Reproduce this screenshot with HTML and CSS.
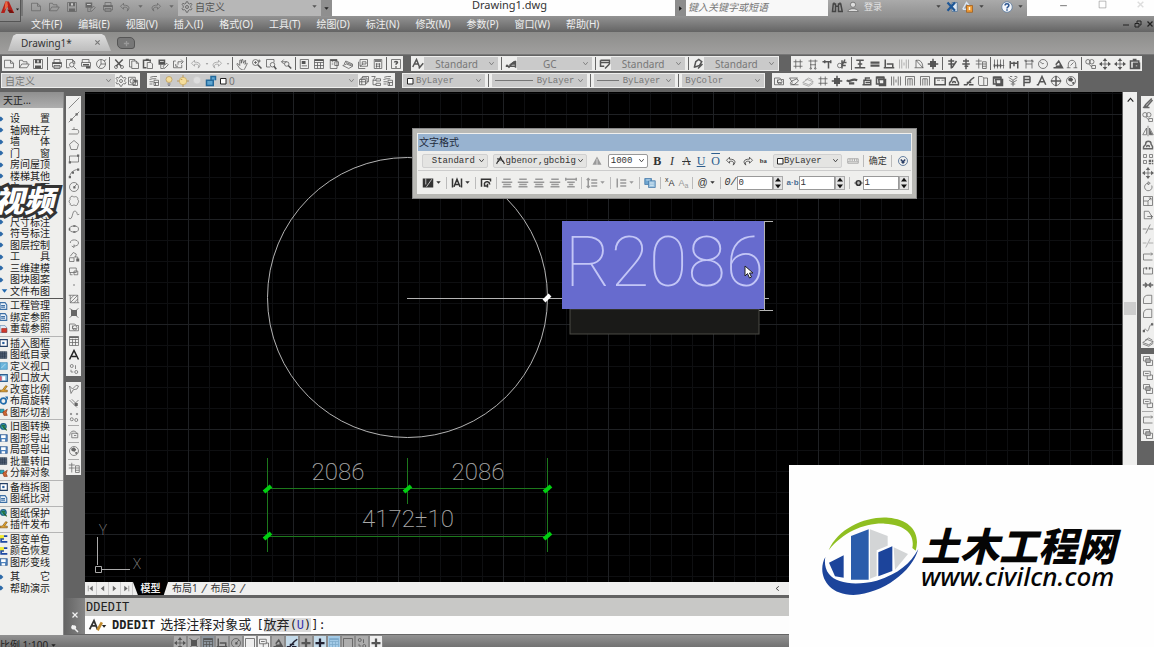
FILE: index.html
```html
<!DOCTYPE html>
<html lang="zh-CN">
<head>
<meta charset="utf-8">
<title>Drawing1.dwg</title>
<link rel="stylesheet" href="styles.css">
</head>
<body>
<svg class="sprite" aria-hidden="true">
<symbol id="new" viewBox="0 0 16 16"><path d="M2 3h8l4 4v6H2zM10 3v4h4"/></symbol>
<symbol id="open" viewBox="0 0 16 16"><path d="M2 13V3h4l1 2h5v3M2 13l3-5h10l-3 5z"/></symbol>
<symbol id="save" viewBox="0 0 16 16"><path d="M2 2h12v12H2z"/><path class="f" d="M4 2h8v5H4zM4 10h8v4H4z"/><path class="w" d="M7 3h2v3H7z"/></symbol>
<symbol id="print" viewBox="0 0 16 16"><path d="M4 6V2h8v4M2 6h12v6H2zM4 10h8v4H4z"/><path class="f" d="M2 6h12v2H2z"/></symbol>
<symbol id="preview" viewBox="0 0 16 16"><path d="M6 13H2V2h8l3 3v3M10 2v3h3"/><circle cx="9" cy="9" r="3"/><path d="M11 11l4 4"/></symbol>
<symbol id="plot" viewBox="0 0 16 16"><path d="M3 6V2h9v4M2 6h12v5H2z"/><path class="f" d="M4 8h8v2H4zM8 11h6v3H8z"/></symbol>
<symbol id="publish" viewBox="0 0 16 16"><circle cx="8" cy="8" r="6"/><path d="M8 2v6h6M8 8l-3 5M12 4l3-2"/></symbol>
<symbol id="cut" viewBox="0 0 16 16"><path stroke-width="2" d="M3 2l8 9M13 2L4 11"/><circle cx="4" cy="12" r="2"/><circle cx="12" cy="12" r="2"/></symbol>
<symbol id="copy" viewBox="0 0 16 16"><path d="M5 12H2V2h7v2M5 4h6l3 3v7H5zM11 4v3h3"/></symbol>
<symbol id="paste" viewBox="0 0 16 16"><path stroke-width="2" d="M6 13H2V3h9v2M5 2h4"/><path d="M7 6h5l2 2v6H7z"/></symbol>
<symbol id="match" viewBox="0 0 16 16"><path class="f" d="M2 2h9v7H2z"/><path class="w" d="M4 4h5v1H4z"/><path d="M5 9v5h4M8 11l5-4 2 2-5 5z"/></symbol>
<symbol id="block" viewBox="0 0 16 16"><path d="M5 4H2v9h11V9M8 9V5h6M12 2l3 3-3 3M5 8v3h3"/></symbol>
<symbol id="undo" viewBox="0 0 16 16"><path d="M6 3L2 7l4 4V8.500c5-1 6 1 5 5 4-4 3-8-5-8z"/></symbol>
<symbol id="redo" viewBox="0 0 16 16"><path d="M10 3l4 4-4 4V8.500c-5-1-6 1-5 5-4-4-3-8 5-8z"/></symbol>
<symbol id="down" viewBox="0 0 16 16"><path class="f" d="M3 5h10l-5 6z"/></symbol>
<symbol id="chev" viewBox="0 0 16 16"><path stroke-width="2" d="M3 5l5 6 5-6"/></symbol>
<symbol id="hand" viewBox="0 0 16 16"><path d="M5 14L1 8l1-1 3 3V3l2-.5V7l1-5h1l1 5 2-4 1 .5-1 5 2-2 1 1-3 6-2 3z"/></symbol>
<symbol id="zoom" viewBox="0 0 16 16"><circle cx="6" cy="6" r="4"/><path stroke-width="2" d="M9 9l5 5"/><path d="M4 6h4M6 4v4M11 2v4M13 4H9"/></symbol>
<symbol id="zwin" viewBox="0 0 16 16"><path d="M12 6V2H2v10h5"/><circle cx="10" cy="9" r="3"/><path stroke-width="2" d="M12 11l3 4"/></symbol>
<symbol id="zprev" viewBox="0 0 16 16"><path d="M2 5h7M2 5l3-3M2 5l3 3"/><circle cx="9" cy="8" r="3"/><path stroke-width="2" d="M11 10l4 4"/></symbol>
<symbol id="props" viewBox="0 0 16 16"><path d="M3 2h11v12H3z"/><path class="f" d="M5 4h5v4H5zM5 10h7v1H5z"/></symbol>
<symbol id="grid" viewBox="0 0 16 16"><path d="M2 2h12v12H2zM2 6h12M6 6v8M10 6v8M2 10h12"/><path class="f" d="M2 2h12v2H2z"/></symbol>
<symbol id="panel" viewBox="0 0 16 16"><path d="M3 2h9v12H3zM9 5h5v5H9zM5 5h2M5 8h2"/><path class="f" d="M3 2h9v2H3z"/></symbol>
<symbol id="stack" viewBox="0 0 16 16"><path d="M1 10l5-2 8 3-5 3zM3 8l2-4 9 4v3M5 6l8 3"/></symbol>
<symbol id="markup" viewBox="0 0 16 16"><path d="M4 2h10v9H4zM2 5v9h9M7 5h5v3H7zM4 11l4-3"/></symbol>
<symbol id="calc" viewBox="0 0 16 16"><path d="M3 2h10v12H3zM5 8h6M5 11h6M6 7v6M10 7v6"/><path class="f" d="M4 3h8v2H4z"/></symbol>
<symbol id="help" viewBox="0 0 16 16"><path d="M2 2h12v12H2z"/><path stroke-width="2" d="M6 6c0-2 4-2 4 0 0 1-2 1-2 3M8 11v2"/></symbol>
<symbol id="gear" viewBox="0 0 16 16"><circle cx="8" cy="8" r="2"/><path d="M7 1h2l.5 2 2 1 2-1 1 2-1.500 1.500v2l1.500 1.500-1 2-2-.5-2 1.500-.5 2H7l-.5-2-2-1.500-2 .5-1-2L3 8.500v-2L1.500 5l1-2 2 1 2-1z"/></symbol>
<symbol id="wsave" viewBox="0 0 16 16"><path d="M2 3h9v10H2z"/><circle cx="7" cy="8" r="3"/><path d="M8 7h6v7H8z"/><path class="f" d="M10 7h3v3h-3z"/></symbol>
<symbol id="textstyle" viewBox="0 0 16 16"><path stroke-width="2" d="M1 12L6 2l4 10M3 8h5M15 7l-6 7"/></symbol>
<symbol id="fontaa" viewBox="0 0 16 16"><path stroke-width="2" d="M4 10l4-8 4 8M6 7h4M1 14l3-6M15 14l-3-6M2 5h3"/></symbol>
<symbol id="dimstyle" viewBox="0 0 16 16"><path stroke-width="2" d="M1 11h13M14 4v9M12 5l-6 6M2 9l4 4"/><path class="f" d="M5 9l9-6v6z"/></symbol>
<symbol id="tabstyle" viewBox="0 0 16 16"><path stroke-width="2" d="M2 3h12v5M2 3v8h5M2 6h12M14 8l-6 6"/></symbol>
<symbol id="mlstyle" viewBox="0 0 16 16"><path stroke-width="2" d="M3 13l2-8 4-3 4 3-3 5-6 2M14 8l-6 6"/></symbol>
<symbol id="layers" viewBox="0 0 16 16"><path d="M3 3l4-1h5M2 6l4-1h5M2 9h5M2 12h4M8 7h6v7H8zM8 10h6M10 10v4"/></symbol>
<symbol id="bulb" viewBox="0 0 16 16"><circle cx="8" cy="6" r="4" fill="#f5dd9a" stroke="#b79a5c"/><path stroke="#556" d="M6 12h4M7 14h2"/></symbol>
<symbol id="sun" viewBox="0 0 16 16"><circle cx="8" cy="8" r="5" fill="#f5dd9a" stroke="#c8ab63"/><path stroke="#b48a3c" d="M8 0v3M8 13v3M0 8h3M13 8h3M5 6h2"/></symbol>
<symbol id="pale" viewBox="0 0 16 16"><circle cx="8" cy="7" r="5" fill="#ddd" stroke="#ccc"/></symbol>
<symbol id="lock" viewBox="0 0 16 16"><path fill="#5ea4cf" stroke="#23699b" stroke-width="2" d="M2 7h9v7H2zM8 7V2h6v5"/></symbol>
<symbol id="sq" viewBox="0 0 16 16"><path fill="#fff" stroke="#222" stroke-width="2" d="M3 3h11v11H3z"/></symbol>
<symbol id="lay1" viewBox="0 0 16 16"><path d="M2 6h8v7H2zM4 6V4h8v7h-2M6 4V2h8v7h-2M2 9h8M5 6v7"/></symbol>
<symbol id="lay2" viewBox="0 0 16 16"><path d="M2 2h5l-2 4M8 5h6v3H8zM8 11h6v3H8zM4 6v7h4M4 7h4"/></symbol>
<symbol id="hash" viewBox="0 0 16 16"><path d="M5 2v12M11 2v12M2 5h12M2 11h12"/></symbol>
<symbol id="axis" viewBox="0 0 16 16"><path d="M5 2v12M11 2v12M2 4h12M4 9h8"/><circle cx="5" cy="14" r="1"/><circle cx="11" cy="14" r="1"/></symbol>
<symbol id="tee" viewBox="0 0 16 16"><path stroke-width="2" d="M2 5h12M10 5v9M5 3v4M13 3v4"/></symbol>
<symbol id="gdim" viewBox="0 0 16 16"><circle cx="5" cy="10" r="3"/><path stroke-width="2" d="M8 3v11M8 6h6M12 2l-4 8M8 10h5"/></symbol>
<symbol id="ibeam" viewBox="0 0 16 16"><path stroke-width="2" d="M3 3h10M8 3v9M1 13h14M5 8h6"/></symbol>
<symbol id="eq" viewBox="0 0 16 16"><path stroke-width="3" d="M2 6h12M2 10h12"/></symbol>
<symbol id="bench" viewBox="0 0 16 16"><path stroke-width="2" d="M3 2v11h12M5 8h8v5M1 13h3"/></symbol>
<symbol id="bars" viewBox="0 0 16 16"><path d="M2 2v12M5 2v12M11 2v12M14 2v12M8 6v4"/></symbol>
<symbol id="tri" viewBox="0 0 16 16"><path d="M2 13h12M4 13V3h4c4 2 5 5 5 10M4 3l9 10"/></symbol>
<symbol id="col" viewBox="0 0 16 16"><path class="f" d="M4 4h8v8H4z"/><path stroke-width="2" d="M8 1v14M1 8h14"/></symbol>
<symbol id="sheng" viewBox="0 0 16 16"><path stroke-width="2" d="M3 4h8M3 8h8M7 1v13M14 4l-6 9"/></symbol>
<symbol id="pin" viewBox="0 0 16 16"><path stroke-width="2" d="M8 1v14M4 4h8M3 8h10M6 11h5"/></symbol>
<symbol id="tpl" viewBox="0 0 16 16"><path d="M1 4h8M5 1v13M1 8h8M10 5h5v9h-5zM10 8h5M10 11h5"/></symbol>
<symbol id="dimv" viewBox="0 0 16 16"><path d="M2 2v12M6 2v12M10 2v12M14 2v12M1 10h14"/><path class="f" d="M5 8h2v4H5zM9 8h2v4H9zM1 8h2v4H1z"/></symbol>
<symbol id="dimh" viewBox="0 0 16 16"><path stroke-width="2" d="M3 4v10M13 4v10M3 7h10M8 5v6"/></symbol>
<symbol id="dima" viewBox="0 0 16 16"><path d="M2 4h12M4 2v12M12 2v12M4 8h8M2 3l3 2M11 3l3 2"/></symbol>
<symbol id="clock" viewBox="0 0 16 16"><circle cx="8" cy="8" r="6"/><path d="M8 8L4 5M8 8l1-1"/></symbol>
<symbol id="ang" viewBox="0 0 16 16"><path stroke-width="2" d="M2 13h12L9 4 5 9M5 11h5M11 8v5"/></symbol>
<symbol id="arc2" viewBox="0 0 16 16"><path d="M3 13V9c0-8 10-8 10 0v4M1 13h5M10 13h5M6 10l4-4"/></symbol>
<symbol id="bub" viewBox="0 0 16 16"><circle cx="4" cy="5" r="3"/><circle cx="9" cy="5" r="3"/><path d="M9 10h5v4H9zM5 8l4 4"/></symbol>
<symbol id="move" viewBox="0 0 16 16"><path d="M8 2v12M2 8h12"/><path class="f" d="M8 0l3 4H5zM8 16l3-4H5zM0 8l4-3v6zM16 8l-4-3v6z"/></symbol>
<symbol id="clip" viewBox="0 0 16 16"><path stroke-width="2" d="M2 4h11v10H2zM5 2h5M6 7h8v7H6zM8 9h4v3H8z"/></symbol>
<symbol id="wave" viewBox="0 0 16 16"><path stroke-width="3" d="M1 7c4 4 6-3 14 0M4 11h7"/></symbol>
<symbol id="leaf" viewBox="0 0 16 16"><path d="M2 4h11M5 8l7-3 2 3-6 5-5-2zM3 13h11M2 4l4 6"/></symbol>
<symbol id="cube" viewBox="0 0 16 16"><path d="M1 10l6-4 8 3-6 4zM1 12l8 3 6-4M4 7l5-3 5 3"/></symbol>
<symbol id="bld" viewBox="0 0 16 16"><path stroke-width="2" d="M2 13h12M4 12V7h9v5M6 7V4h6M6 10h6"/></symbol>
<symbol id="frame" viewBox="0 0 16 16"><path stroke-width="2" d="M2 3h10v9H2zM5 6h9v8H6z"/><path class="f" d="M2 2h10v3H2z"/></symbol>
<symbol id="door" viewBox="0 0 16 16"><path d="M2 14V2h12v12M5 14V5h6v9M8 5v9"/></symbol>
<symbol id="sheet" viewBox="0 0 16 16"><path stroke-width="2" d="M1 4h14v9H1z"/><path d="M4 7h4M10 7h3"/></symbol>
<symbol id="stair" viewBox="0 0 16 16"><path stroke-width="2" d="M1 13h4l6-7 4-3M5 10h6M8 13h6"/></symbol>
<symbol id="book" viewBox="0 0 16 16"><path d="M2 2h5l2 2v10H3L2 12zM9 4h5v10H9"/></symbol>
<symbol id="tree" viewBox="0 0 16 16"><path d="M8 15V7M2 3l6 4 6-4M3 7l5 3 5-3M5 12h6M4 2h3M10 2h3"/></symbol>
<symbol id="flag" viewBox="0 0 16 16"><path stroke-width="2" d="M4 15V2h8M4 6h8M4 10h8M12 2v8"/></symbol>
<symbol id="at" viewBox="0 0 16 16"><path stroke-width="2" d="M3 13L8 2l5 11M5 9h6M1 13h3"/></symbol>
<symbol id="target" viewBox="0 0 16 16"><circle cx="8" cy="8" r="6"/><path stroke-width="2" d="M8 1v14M1 8h14"/></symbol>
<symbol id="globe" viewBox="0 0 16 16"><circle cx="8" cy="8" r="6"/><path class="f" d="M4 5l4-2 3 3-2 3-4-1zM9 10l4-1-2 4z"/></symbol>
<symbol id="line" viewBox="0 0 16 16"><path d="M1 15L15 1"/></symbol>
<symbol id="xline" viewBox="0 0 16 16"><path d="M1 15L15 1"/><path class="f" d="M3 10h3v3H3zM10 3h3v3h-3z"/></symbol>
<symbol id="pline" viewBox="0 0 16 16"><path d="M1 12h11c3 0 3-6 0-6H8M8 3v3H5"/></symbol>
<symbol id="poly" viewBox="0 0 16 16"><path d="M8 2l6 5-2 7H4L2 7z"/></symbol>
<symbol id="rect" viewBox="0 0 16 16"><path d="M2 4h12v8H2z"/><path class="f" d="M1 11h3v3H1zM12 2h3v3h-3z"/></symbol>
<symbol id="arc" viewBox="0 0 16 16"><path d="M2 14C3 7 7 4 14 3"/><path class="f" d="M1 12h3v3H1zM5 6h3v3H5zM12 2h3v3h-3z"/></symbol>
<symbol id="circ" viewBox="0 0 16 16"><circle cx="8" cy="8" r="6"/><path d="M8 8l4-4"/><path class="f" d="M7 7h3v3H7z"/></symbol>
<symbol id="cloud" viewBox="0 0 16 16"><path d="M4 2c2-1 3 0 4 1 2-2 6 0 5 3 2 2 1 4 0 5 0 3-3 4-5 2-2 2-6 1-5-2-2-1-2-4 0-5-1-1 0-3 1-4z"/></symbol>
<symbol id="spline" viewBox="0 0 16 16"><path d="M1 12c6 5 4-12 9-9 4 2 0 6 5 4"/></symbol>
<symbol id="ell" viewBox="0 0 16 16"><ellipse cx="8" cy="8" rx="6" ry="4"/><path class="f" d="M1 7h2v3H1zM7 3h3v2H7zM7 11h3v2H7z"/></symbol>
<symbol id="earc" viewBox="0 0 16 16"><path d="M3 8c0-6 11-5 11 0 0 3-3 4-6 4M8 10v4l-3-2"/></symbol>
<symbol id="ins" viewBox="0 0 16 16"><path d="M3 7l4-5 4 2-1 4M2 9h6v5H2zM8 8h5v5"/><path class="f" d="M11 10h4v4h-4z"/></symbol>
<symbol id="mk" viewBox="0 0 16 16"><path d="M2 4h9v6H2zM8 8h5v5H8zM3 10v3h3"/></symbol>
<symbol id="pt" viewBox="0 0 16 16"><circle class="f" cx="8" cy="8" r="1"/></symbol>
<symbol id="hatch" viewBox="0 0 16 16"><path d="M3 3h10v10H3zM3 8l5-5M3 13L13 3M8 13l5-5M1 3h2M13 13h2"/></symbol>
<symbol id="grad" viewBox="0 0 16 16"><path d="M2 2l4 2M14 2l-3 2M2 14l3-2M14 14l-3-2"/><path class="f" d="M4 4h8v8H4z"/></symbol>
<symbol id="region" viewBox="0 0 16 16"><path d="M2 13V4h7l2 2h3v7zM6 6v4h5"/><circle cx="9" cy="9" r="3"/></symbol>
<symbol id="table" viewBox="0 0 16 16"><path d="M2 2h12v12H2zM2 6h12M2 10h12M6 5v9M10 5v9"/><path class="f" d="M2 2h12v2H2z"/></symbol>
<symbol id="mtext" viewBox="0 0 16 16"><path stroke="#222" stroke-width="2" d="M2 14L8 2l6 12M5 10h6"/></symbol>
<symbol id="addsel" viewBox="0 0 16 16"><circle cx="5" cy="4" r="2"/><circle cx="11" cy="12" r="2"/><path d="M10 3v5M4 9v3h3"/></symbol>
<symbol id="tag" viewBox="0 0 16 16"><path d="M4 14L2 4l4 4 5-5 3 1-2 4-5 1z"/></symbol>
<symbol id="tag2" viewBox="0 0 16 16"><path d="M2 4l6 6 6-6M5 3l7 7M8 10l4 4"/><path class="f" d="M9 8h4v4H9z"/></symbol>
<symbol id="dots" viewBox="0 0 16 16"><circle cx="4" cy="4" r="1"/><circle cx="12" cy="4" r="1"/><circle cx="5" cy="11" r="2"/><circle cx="11" cy="12" r="2"/></symbol>
<symbol id="para" viewBox="0 0 16 16"><path d="M2 10c1-7 8-8 10-2M5 7h8v6H5zM8 10h3"/></symbol>
<symbol id="erase" viewBox="0 0 16 16"><path stroke-width="2" d="M13 2L5 10l-2 3 4-1 7-8M2 14h8"/></symbol>
<symbol id="mirror" viewBox="0 0 16 16"><path d="M8 1v14M6 4v9H1zM10 4v9h5z"/><path class="f" d="M10 5l4 8h-4z"/></symbol>
<symbol id="offset" viewBox="0 0 16 16"><path stroke-width="2" d="M2 13c-1-5 3-3 3-7 0-4 7-4 7 0 0 3 3 2 2 7zM6 11c0-3 4-3 4 0"/></symbol>
<symbol id="array" viewBox="0 0 16 16"><path d="M2 2h4v4H2zM10 2h4v4h-4zM2 10h4v4H2z"/><path class="f" d="M9 9h3v3H9zM13 9h2v3h-2zM9 13h3v2H9zM13 13h2v2h-2z"/></symbol>
<symbol id="rotate" viewBox="0 0 16 16"><path d="M8 3a5 5 0 1 0 5 3M8 1v4l3-2z"/></symbol>
<symbol id="scale" viewBox="0 0 16 16"><path d="M2 2h12v12H2zM2 8h6v6M8 8l4-4M12 7V4H9"/></symbol>
<symbol id="stretch" viewBox="0 0 16 16"><path d="M3 13V3h6l4 7v3zM7 10h7M12 8l2 2-2 2"/></symbol>
<symbol id="trim" viewBox="0 0 16 16"><path d="M1 8h5M9 8h6M11 2L5 14"/></symbol>
<symbol id="brk" viewBox="0 0 16 16"><path d="M14 4H2v8h12M12 2l2 2-2 2"/></symbol>
<symbol id="brk2" viewBox="0 0 16 16"><path d="M6 4H2v8h12V4h-4"/><path class="f" d="M5 3h2v3H5zM9 3h2v3H9z"/></symbol>
<symbol id="join" viewBox="0 0 16 16"><path stroke-width="2" d="M1 8h5M10 8h5M4 5l3 3-3 3M12 5L9 8l3 3"/></symbol>
<symbol id="fillet" viewBox="0 0 16 16"><path d="M2 14V8c1-4 3-5 6-5h5v11z"/></symbol>
<symbol id="blend" viewBox="0 0 16 16"><path d="M2 14c2-9 5 4 7-3 1-4 2-6 5-8"/><path class="f" d="M1 12h3v3H1zM12 3h3v3h-3z"/></symbol>
<symbol id="order" viewBox="0 0 16 16"><path d="M2 2h8v6H2zM6 10v4h8V7h-3"/><path fill="#aaa" d="M5 5h6v5H5z"/></symbol>
<symbol id="order2" viewBox="0 0 16 16"><path d="M2 3h9v6H2zM7 9v5h7V8h-3M4 6h5"/></symbol>
<symbol id="nfirst" viewBox="0 0 16 16"><path d="M4 3v10"/><path class="f" d="M12 3v10L6 8z"/></symbol>
<symbol id="nprev" viewBox="0 0 16 16"><path class="f" d="M11 3v10L5 8z"/></symbol>
<symbol id="nnext" viewBox="0 0 16 16"><path class="f" d="M5 3v10l6-5z"/></symbol>
<symbol id="nlast" viewBox="0 0 16 16"><path d="M12 3v10"/><path class="f" d="M4 3v10l6-5z"/></symbol>
<symbol id="x" viewBox="0 0 16 16"><path stroke-width="2.500" d="M3 3l10 10M13 3L3 13"/></symbol>
<symbol id="wrench" viewBox="0 0 16 16"><path stroke-width="3" d="M14 14L7 7M3 2c-3 4 1 7 5 5 2-3 0-5-2-5v4H4z"/></symbol>
<symbol id="annot" viewBox="0 0 16 16"><path class="f" d="M8 2l6 11H2z"/><path stroke="#eee" d="M8 5v8"/></symbol>
<symbol id="ruler" viewBox="0 0 16 16"><path d="M1 5h14v6H1zM4 5v3M7 5v3M10 5v3M13 5v3M1 9h14"/></symbol>
<symbol id="round" viewBox="0 0 16 16"><circle cx="8" cy="8" r="6" stroke="#3a5c88"/><path stroke="#2a3e66" stroke-width="2" d="M5 6l3 3 3-3"/><path fill="#2a3e66" stroke="none" d="M5 9h6l-3 3z"/></symbol>
<symbol id="mcol" viewBox="0 0 16 16"><path class="f" d="M1 2h14v12H1z"/><path stroke="#eee" d="M5 2v8M13 3L6 13"/></symbol>
<symbol id="mjust" viewBox="0 0 16 16"><path stroke-width="2" d="M2 2v12M14 2v12M4 13L8 3l4 10M5 10h6"/></symbol>
<symbol id="parag" viewBox="0 0 16 16"><path stroke-width="2" d="M2 13V3h12v3M6 8c2-3 7-2 7 2M6 8v4h4M10 9v5"/></symbol>
<symbol id="align" viewBox="0 0 16 16"><path stroke-width="2" d="M3 3h10M1 7h14M3 10h10M2 13h12"/></symbol>
<symbol id="dist" viewBox="0 0 16 16"><path stroke-width="2" d="M1 3h14M3 7h10M5 10h6M3 13h10M1 1v4M15 1v4"/></symbol>
<symbol id="lsp" viewBox="0 0 16 16"><path stroke-width="2" d="M3 2v12M7 4h8M7 8h8M7 12h8M1 4l2-2 2 2M1 12l2 2 2-2"/></symbol>
<symbol id="num" viewBox="0 0 16 16"><path stroke-width="2" d="M3 2v12M7 4h8M7 8h8M7 12h8"/></symbol>
<symbol id="field" viewBox="0 0 16 16"><path fill="#6ea5cf" stroke="#4478a8" d="M1 2h9v8H1z"/><path fill="#9cc3df" stroke="#4478a8" d="M6 5h9v9H6z"/><path stroke="#e8f3fa" d="M3 4h5M8 8h5M8 11h5"/></symbol>
<symbol id="oval" viewBox="0 0 16 16"><ellipse cx="8" cy="8" rx="4" ry="4" stroke-width="3"/><path d="M0 8h16"/></symbol>
<symbol id="spin" viewBox="0 0 10 16"><path class="f" d="M5 1l4 5H1zM5 15l4-5H1z"/></symbol>
<symbol id="bino" viewBox="0 0 16 16"><path stroke-width="2" d="M2 14l1-10h3v10zM10 14V4h3l2 10zM6 7h4M4 2v2M12 2v2"/></symbol>
<symbol id="user" viewBox="0 0 16 16"><circle cx="8" cy="5" r="3.500" fill="#ddd"/><path fill="#ddd" d="M1 14c1-5 13-5 14 0z"/></symbol>
<symbol id="exch" viewBox="0 0 16 16"><path fill="#dfe8f2" stroke="#4f7296" d="M8 2h7v12H8z"/><path stroke="#1f5796" stroke-width="3" d="M2 2l10 11M12 2L2 13"/></symbol>
<symbol id="a360" viewBox="0 0 16 16"><path stroke="#d7e3f2" stroke-width="2" d="M1 11L6 2l5 6M1 11h5"/><path fill="#ee9a35" stroke="#9e5b19" d="M6 6h8v9H6z"/><path stroke="#fff3d8" stroke-width="2" d="M10 8v4"/></symbol>
<symbol id="qm" viewBox="0 0 16 16"><circle cx="8" cy="8" r="7" fill="#f3f6fb" stroke="#55789f"/><path stroke="#2c558f" stroke-width="2" d="M5.500 6c0-3 5-3 5 0 0 2-2.500 1.500-2.500 4M8 11v2"/></symbol>
<symbol id="min" viewBox="0 0 16 16"><path stroke-width="2" d="M2 10h12"/></symbol>
<symbol id="max" viewBox="0 0 16 16"><path d="M2 2h12v12H2z"/></symbol>
<symbol id="rest" viewBox="0 0 16 16"><path stroke-width="2" d="M2 7h8v7H2zM6 6V2h8v8h-3"/></symbol>
<symbol id="plus" viewBox="0 0 16 16"><path stroke-width="3" d="M8 2v12M2 8h12"/></symbol>
<symbol id="arr" viewBox="0 0 16 16"><path fill="#2d6aa8" stroke="none" d="M0 4h2l4 4-4 4H0z"/></symbol>
<symbol id="p-doc" viewBox="0 0 16 16"><path fill="#eaf2fa" stroke="#3d6fa5" stroke-width="2" d="M0 2h9l3 4v8H0zM2 7h7M2 10h7"/></symbol>
<symbol id="p-red" viewBox="0 0 16 16"><path fill="#eaf2fa" stroke="#3d6fa5" d="M0 2h9l3 4v8H0z"/><path fill="#d2382c" stroke="#8f1e16" d="M3 7h9v7H3z"/></symbol>
<symbol id="p-dark" viewBox="0 0 16 16"><path fill="#56657a" stroke="#243346" d="M0 2h12v12H0zM0 6h12M0 10h12M4 2v12M8 2v12"/></symbol>
<symbol id="p-ins" viewBox="0 0 16 16"><path fill="#fff" stroke="#243f66" stroke-width="2" d="M0 2h13v12H0z"/><path fill="#2a5f9c" stroke="none" d="M4 6h4v4H4z"/></symbol>
<symbol id="p-blue" viewBox="0 0 16 16"><path fill="#6bb6dd" stroke="#2d7fb0" d="M0 2h13v12H0z"/><path stroke="#e6f5fc" d="M2 12L10 4"/></symbol>
<symbol id="p-view" viewBox="0 0 16 16"><path fill="#9cc8e8" stroke="#2d5f90" stroke-width="2" d="M0 2h13v12H0z"/><path fill="#d85a6a" stroke="none" d="M0 5h3v8H0z"/><path fill="#fff" stroke="none" d="M4 5h5v7H4z"/></symbol>
<symbol id="p-gold" viewBox="0 0 16 16"><path fill="#e2a22b" stroke="#704600" d="M0 13h13v-3H8l5-7-3-1-6 8H0z"/></symbol>
<symbol id="p-ring" viewBox="0 0 16 16"><circle cx="6" cy="8" r="5" stroke="#226cab" stroke-width="3"/><path fill="#226cab" stroke="none" d="M9 0h5v6z"/></symbol>
<symbol id="p-disk" viewBox="0 0 16 16"><path fill="#4f83bd" stroke="#1f4880" d="M0 2h13v12H0z"/><path fill="#fff" stroke="none" d="M2 3h8v5H2zM3 10h6v4H3z"/></symbol>
<symbol id="p-mix" viewBox="0 0 16 16"><path fill="#2aa7b9" stroke="#11556d" d="M0 3h7v6H0z"/><path fill="#d06632" stroke="#7c2d0f" d="M5 8l8-5-2 6 2 5H7z"/></symbol>
<symbol id="p-green" viewBox="0 0 16 16"><circle cx="6" cy="7" r="5" fill="#3aa89d" stroke="#1b5b86" stroke-width="2"/><path stroke="#215f24" stroke-width="2" d="M6 8l6 6M3 6h6"/></symbol>
<symbol id="p-yel" viewBox="0 0 16 16"><path fill="#f0ea34" stroke="none" d="M0 1h7v7H0z"/><path stroke="#1e4aa3" stroke-width="3" d="M7 3h6M7 8H2v5h11"/></symbol>
</svg>

<header class="titlebar">
  <button class="app" aria-label="应用程序菜单"><svg class="applogo" viewBox="0 0 16 16"><path fill="#b3201a" d="M0 13L5 0h4l6 13h-5L7 5l-3 8z"/><path fill="#ec6440" d="M5 0h2l1 5-4 5z"/><path fill="#74110d" d="M7 9l5 1 3 3h-5z"/></svg><svg class="tiny"><use href="#down"/></svg></button>
  <div class="quick">
    <button aria-label="新建"><svg><use href="#new"/></svg></button><button aria-label="打开"><svg><use href="#open"/></svg></button><button aria-label="保存"><svg><use href="#save"/></svg></button><button aria-label="另存为"><svg><use href="#match"/></svg></button><button aria-label="打印"><svg><use href="#print"/></svg></button><button aria-label="放弃"><svg><use href="#undo"/></svg></button><svg class="tiny"><use href="#down"/></svg><button aria-label="重做"><svg><use href="#redo"/></svg></button><svg class="tiny"><use href="#down"/></svg>
  </div>
  <label class="combo workspace-pick"><svg><use href="#gear"/></svg><select aria-label="工作空间"><option>自定义</option></select><svg class="tiny"><use href="#down"/></svg></label>
  <button class="more" aria-label="更多"><svg class="tiny"><use href="#down"/></svg></button>
  <h1 class="doc-title">Drawing1.dwg</h1>
  <button class="expand" aria-label="展开"><svg class="tiny"><use href="#nnext"/></svg></button>
  <input class="search" type="text" aria-label="搜索" placeholder="键入关键字或短语">
  <div class="account">
    <button aria-label="搜索"><svg><use href="#bino"/></svg></button><button class="login"><svg><use href="#user"/></svg>登录</button><svg class="tiny push"><use href="#down"/></svg><button aria-label="Exchange"><svg><use href="#exch"/></svg></button><button aria-label="A360"><svg><use href="#a360"/></svg></button><svg class="tiny"><use href="#down"/></svg><button class="qm" aria-label="帮助"><svg><use href="#qm"/></svg></button><svg class="tiny"><use href="#down"/></svg>
  </div>
  <div class="winbtns"><button aria-label="最小化"><svg><use href="#min"/></svg></button><button aria-label="最大化"><svg><use href="#max"/></svg></button><button class="faint" aria-label="关闭"><svg><use href="#x"/></svg></button></div>
</header>

<nav class="menubar">
  <button>文件(F)</button><button>编辑(E)</button><button>视图(V)</button><button>插入(I)</button><button>格式(O)</button><button>工具(T)</button><button>绘图(D)</button><button>标注(N)</button><button>修改(M)</button><button>参数(P)</button><button>窗口(W)</button><button>帮助(H)</button>
  <span class="childbtns"><button aria-label="最小化"><svg><use href="#min"/></svg></button><button aria-label="还原"><svg><use href="#rest"/></svg></button><button aria-label="关闭"><svg><use href="#x"/></svg></button></span>
</nav>

<div class="filetabs">
  <div class="filetab"><span>Drawing1*</span><button aria-label="关闭"><svg class="tiny"><use href="#x"/></svg></button></div>
  <button class="newtab" aria-label="新图形"><svg class="tiny"><use href="#plus"/></svg></button>
</div>

<div class="toolrows">
  <div class="toolrow">
    <div class="tools standard">
      <button aria-label="新建"><svg><use href="#new"/></svg></button><button aria-label="打开"><svg><use href="#open"/></svg></button><button aria-label="保存"><svg><use href="#save"/></svg></button><i></i>
      <button aria-label="打印"><svg><use href="#print"/></svg></button><button aria-label="预览"><svg><use href="#preview"/></svg></button><button aria-label="发布"><svg><use href="#plot"/></svg></button><button aria-label="三维打印"><svg><use href="#publish"/></svg></button><i></i>
      <button aria-label="剪切"><svg><use href="#cut"/></svg></button><button aria-label="复制"><svg><use href="#copy"/></svg></button><button aria-label="粘贴"><svg><use href="#paste"/></svg></button><button aria-label="特性匹配"><svg><use href="#match"/></svg></button><button aria-label="块编辑器"><svg><use href="#block"/></svg></button><i></i>
      <button class="dim" aria-label="放弃"><svg><use href="#undo"/></svg></button><svg class="dot"><use href="#down"/></svg><button class="dim" aria-label="重做"><svg><use href="#redo"/></svg></button><svg class="dot"><use href="#down"/></svg><i></i>
      <button aria-label="平移"><svg><use href="#hand"/></svg></button><button aria-label="实时缩放"><svg><use href="#zoom"/></svg></button><button aria-label="窗口缩放"><svg><use href="#zwin"/></svg></button><button aria-label="缩放上一个"><svg><use href="#zprev"/></svg></button><i></i>
      <button aria-label="特性"><svg><use href="#props"/></svg></button><button aria-label="设计中心"><svg><use href="#grid"/></svg></button><button aria-label="工具选项板"><svg><use href="#panel"/></svg></button><button aria-label="图纸集"><svg><use href="#stack"/></svg></button><button aria-label="标记集"><svg><use href="#markup"/></svg></button><button aria-label="计算器"><svg><use href="#calc"/></svg></button><i></i>
      <button aria-label="帮助"><svg><use href="#help"/></svg></button>
    </div>
    <div class="tools styles">
      <button aria-label="文字样式"><svg><use href="#textstyle"/></svg></button><label class="combo off"><select disabled aria-label="文字样式"><option>Standard</option></select><svg class="tiny"><use href="#chev"/></svg></label><i></i>
      <button aria-label="标注样式"><svg><use href="#dimstyle"/></svg></button><label class="combo off"><select disabled aria-label="标注样式"><option>GC</option></select><svg class="tiny"><use href="#chev"/></svg></label><i></i>
      <button aria-label="表格样式"><svg><use href="#tabstyle"/></svg></button><label class="combo off"><select disabled aria-label="表格样式"><option>Standard</option></select><svg class="tiny"><use href="#chev"/></svg></label><i></i>
      <button aria-label="引线样式"><svg><use href="#mlstyle"/></svg></button><label class="combo off"><select disabled aria-label="引线样式"><option>Standard</option></select><svg class="tiny"><use href="#chev"/></svg></label>
    </div>
    <div class="tools arch">
      <button aria-label="轴网"><svg><use href="#hash"/></svg></button><button aria-label="轴号"><svg><use href="#axis"/></svg></button><button aria-label="轴标"><svg><use href="#tee"/></svg></button><button aria-label="轴改"><svg><use href="#gdim"/></svg></button><i></i>
      <button aria-label="柱"><svg><use href="#ibeam"/></svg></button><button aria-label="墙"><svg><use href="#eq"/></svg></button><button aria-label="台"><svg><use href="#bench"/></svg></button><button class="dim" aria-label="窗"><svg><use href="#bars"/></svg></button><button aria-label="门"><svg><use href="#tri"/></svg></button><button aria-label="柱子"><svg><use href="#col"/></svg></button><i></i>
      <button aria-label="注一"><svg><use href="#sheng"/></svg></button><button aria-label="注二"><svg><use href="#pin"/></svg></button><button aria-label="注三"><svg><use href="#tpl"/></svg></button><i></i>
      <button aria-label="逐点标注"><svg><use href="#dimv"/></svg></button><button aria-label="快速标注"><svg><use href="#dimh"/></svg></button><button aria-label="两点标注"><svg><use href="#dima"/></svg></button><button aria-label="半径"><svg><use href="#clock"/></svg></button><button aria-label="角度"><svg><use href="#ang"/></svg></button><button aria-label="弧长"><svg><use href="#arc2"/></svg></button><i></i>
      <button aria-label="复制"><svg><use href="#bub"/></svg></button><button aria-label="移动"><svg><use href="#move"/></svg></button><button aria-label="移位"><svg><use href="#move"/></svg></button><button aria-label="粘贴"><svg><use href="#clip"/></svg></button>
    </div>
  </div>
  <div class="toolrow">
    <div class="tools space">
      <label class="combo off"><select disabled aria-label="工作空间"><option>自定义</option></select><svg class="tiny"><use href="#chev"/></svg></label><button aria-label="设置"><svg><use href="#gear"/></svg></button><button aria-label="保存工作空间"><svg><use href="#wsave"/></svg></button>
    </div>
    <div class="tools layer">
      <button aria-label="图层"><svg><use href="#layers"/></svg></button><label class="combo off"><svg><use href="#bulb"/></svg><svg><use href="#sun"/></svg><svg><use href="#pale"/></svg><svg><use href="#lock"/></svg><svg class="mini"><use href="#sq"/></svg><select disabled aria-label="图层"><option>0</option></select><svg class="tiny"><use href="#chev"/></svg></label><button aria-label="置为当前"><svg><use href="#lay1"/></svg></button><button aria-label="上一图层"><svg><use href="#lay2"/></svg></button><button aria-label="图层状态"><svg><use href="#layers"/></svg></button>
    </div>
    <div class="tools props mono">
      <label class="combo off first"><svg class="mini"><use href="#sq"/></svg><select disabled aria-label="颜色"><option>ByLayer</option></select><svg class="tiny"><use href="#chev"/></svg></label><i></i>
      <label class="combo off"><span class="rule"></span><select disabled aria-label="线型"><option>ByLayer</option></select><svg class="tiny"><use href="#chev"/></svg></label><i></i>
      <label class="combo off narrow"><span class="rule"></span><select disabled aria-label="线宽"><option>ByLayer</option></select><svg class="tiny"><use href="#chev"/></svg></label><i></i>
      <label class="combo off last"><select disabled aria-label="打印样式"><option>ByColor</option></select><svg class="tiny"><use href="#chev"/></svg></label>
    </div>
    <div class="tools common">
      <button aria-label="图集"><svg><use href="#region"/></svg></button><button aria-label="样式"><svg><use href="#leaf"/></svg></button><button class="dim" aria-label="三维"><svg><use href="#cube"/></svg></button><button aria-label="轴网"><svg><use href="#hash"/></svg></button><button aria-label="柱"><svg><use href="#col"/></svg></button><button aria-label="墙"><svg><use href="#wave"/></svg></button><button aria-label="房屋"><svg><use href="#bld"/></svg></button><button aria-label="窗框"><svg><use href="#frame"/></svg></button><button aria-label="栏杆"><svg><use href="#bars"/></svg></button><button aria-label="门"><svg><use href="#door"/></svg></button><button aria-label="双门"><svg><use href="#door"/></svg></button><button aria-label="图纸"><svg><use href="#sheet"/></svg></button><button aria-label="屋顶"><svg><use href="#offset"/></svg></button><button aria-label="楼梯"><svg><use href="#stair"/></svg></button><button aria-label="图册"><svg><use href="#book"/></svg></button><button aria-label="表格"><svg><use href="#frame"/></svg></button><button aria-label="树木"><svg><use href="#tree"/></svg></button><button aria-label="标高"><svg><use href="#flag"/></svg></button><button aria-label="文字"><svg><use href="#at"/></svg></button><button aria-label="定位"><svg><use href="#target"/></svg></button><button aria-label="渲染"><svg><use href="#globe"/></svg></button>
    </div>
  </div>
</div>

<main class="work">
  <aside class="palette">
    <h2>天正...</h2>
    <div class="lists">
      <ul class="g16"><li><svg><use href="#arr"/></svg><span class="wide"><b>设</b><b>置</b></span></li><li><svg><use href="#arr"/></svg>轴网柱子</li><li><svg><use href="#arr"/></svg><span class="wide"><b>墙</b><b>体</b></span></li><li><svg><use href="#arr"/></svg><span class="wide"><b>门</b><b>窗</b></span></li><li><svg><use href="#arr"/></svg>房间屋顶</li><li><svg><use href="#arr"/></svg>楼梯其他</li><li><svg><use href="#arr"/></svg><span class="wide"><b>立</b><b>面</b></span></li><li></li><li></li><li><svg><use href="#arr"/></svg>尺寸标注</li><li><svg><use href="#arr"/></svg>符号标注</li><li><svg><use href="#arr"/></svg>图层控制</li><li><svg><use href="#arr"/></svg><span class="wide"><b>工</b><b>具</b></span></li><li><svg><use href="#arr"/></svg>三维建模</li><li><svg><use href="#arr"/></svg>图块图案</li><li class="open"><svg><use href="#down"/></svg>文件布图</li></ul>
      <ul class="g3 dark"><li><svg><use href="#p-doc"/></svg>工程管理</li><li><svg><use href="#p-doc"/></svg>绑定参照</li><li><svg><use href="#p-red"/></svg>重载参照</li></ul>
      <ul class="g7"><li><svg><use href="#p-ins"/></svg>插入图框</li><li><svg><use href="#p-dark"/></svg>图纸目录</li><li><svg><use href="#p-blue"/></svg>定义视口</li><li><svg><use href="#p-view"/></svg>视口放大</li><li><svg><use href="#p-gold"/></svg>改变比例</li><li><svg><use href="#p-ring"/></svg>布局旋转</li><li><svg><use href="#p-mix"/></svg>图形切割</li></ul>
      <ul class="g5"><li><svg><use href="#p-green"/></svg>旧图转换</li><li><svg><use href="#p-disk"/></svg>图形导出</li><li><svg><use href="#p-disk"/></svg>局部导出</li><li><svg><use href="#p-dark"/></svg>批量转旧</li><li><svg><use href="#p-mix"/></svg>分解对象</li></ul>
      <ul class="g2"><li><svg><use href="#p-ins"/></svg>备档拆图</li><li><svg><use href="#p-doc"/></svg>图纸比对</li></ul>
      <ul class="g2"><li><svg><use href="#p-green"/></svg>图纸保护</li><li><svg><use href="#p-gold"/></svg>插件发布</li></ul>
      <ul class="g3"><li><svg><use href="#p-yel"/></svg>图变单色</li><li><svg><use href="#p-yel"/></svg>颜色恢复</li><li><svg><use href="#p-disk"/></svg>图形变线</li></ul>
      <ul class="g2 plain"><li><svg><use href="#arr"/></svg><span class="wide"><b>其</b><b>它</b></span></li><li><svg><use href="#arr"/></svg>帮助演示</li></ul>
    </div>
    <span class="watermark">视频</span>
  </aside>

  <section class="right">
    <div class="stage">
      <div class="sidebar draw">
        <div class="vtools"><button aria-label="直线"><svg><use href="#line"/></svg></button><button aria-label="构造线"><svg><use href="#xline"/></svg></button><button aria-label="多段线"><svg><use href="#pline"/></svg></button><button aria-label="多边形"><svg><use href="#poly"/></svg></button><button aria-label="矩形"><svg><use href="#rect"/></svg></button><button aria-label="圆弧"><svg><use href="#arc"/></svg></button><button aria-label="圆"><svg><use href="#circ"/></svg></button><button aria-label="修订云线"><svg><use href="#cloud"/></svg></button><button aria-label="样条曲线"><svg><use href="#spline"/></svg></button><button aria-label="椭圆"><svg><use href="#ell"/></svg></button><button aria-label="椭圆弧"><svg><use href="#earc"/></svg></button><button aria-label="插入块"><svg><use href="#ins"/></svg></button><button aria-label="创建块"><svg><use href="#mk"/></svg></button><button aria-label="点"><svg><use href="#pt"/></svg></button><button aria-label="图案填充"><svg><use href="#hatch"/></svg></button><button aria-label="渐变色"><svg><use href="#grad"/></svg></button><button aria-label="面域"><svg><use href="#region"/></svg></button><button aria-label="表格"><svg><use href="#table"/></svg></button><button aria-label="多行文字"><svg><use href="#mtext"/></svg></button><button aria-label="添加选定对象"><svg><use href="#addsel"/></svg></button></div>
        <div class="vtools"><button aria-label="约束"><svg><use href="#tag"/></svg></button><button aria-label="自动约束"><svg><use href="#tag2"/></svg></button><button aria-label="显示约束"><svg><use href="#dots"/></svg></button><i></i><button aria-label="标注约束"><svg><use href="#para"/></svg></button><i></i><button aria-label="全部显示"><svg><use href="#globe"/></svg></button><i></i><button aria-label="参数管理器"><svg><use href="#tpl"/></svg></button></div>
      </div>

      <div class="view">
        <div class="canvas">
          <svg class="drawing" role="img" aria-label="图形">
            <defs>
              <pattern id="minor" width="21" height="21" patternUnits="userSpaceOnUse" x="103" y="22"><path d="M.5 0v21M0 .5h21" stroke="#0e0f11" fill="none"/></pattern>
              <pattern id="major" width="105" height="105" patternUnits="userSpaceOnUse" x="103" y="22"><path d="M.5 0v105M0 .5h105" stroke="#1f2124" fill="none"/></pattern>
            </defs>
            <rect width="100%" height="100%" fill="url(#minor)"/>
            <rect width="100%" height="100%" fill="url(#major)"/>
            <g fill="none" stroke="#b4b4b4">
              <circle cx="322.500" cy="205.500" r="140"/>
              <path d="M322 206.500h362M678 129.500h10M679.500 129v90M670 218.500h18"/>
              <path d="M459 209l6-6" stroke="#fff" stroke-width="4"/>
            </g>
            <rect x="485" y="217" width="189" height="25" fill="#1a1a18" stroke="#4a4a45"/>
            <g stroke="#1c781c" fill="none"><path d="M182.500 366v94M322.500 366v46M462.500 366v94M182 396.500h280M182 444.500h280"/></g>
            <path d="M179 400l7-6M319 400l7-6M459 400l7-6M179 447l7-6M459 447l7-6" stroke="#00cf10" stroke-width="4"/>
            <g class="dimtext"><text x="253" y="388">2086</text><text x="393" y="388">2086</text><text x="323" y="435">4172±10</text></g>
            <g stroke="#aaa" fill="none"><path d="M12.500 473v-28M16 477.500h29"/><path d="M10.500 474.500h6v6h-6z"/></g>
            <g class="ucs"><text x="18" y="443">Y</text><text x="52" y="477">X</text></g>
          </svg>
          <input class="mtext" type="text" value="R2086" aria-label="多行文字">
          <svg class="cursor" viewBox="0 0 10 14"><path d="M1 1v10l2.500-2.500L5.500 13l2-1-2-4H9z" fill="#fff" stroke="#222"/></svg>

          <section class="dialog" aria-label="文字格式">
            <h2>文字格式</h2>
            <div class="drow">
              <label class="combo d-style"><select aria-label="样式"><option>Standard</option></select><svg class="tiny"><use href="#chev"/></svg></label>
              <label class="combo d-font"><svg><use href="#fontaa"/></svg><select aria-label="字体"><option>gbenor,gbcbig</option></select><svg class="tiny"><use href="#chev"/></svg></label>
              <button class="dim" aria-label="注释性"><svg><use href="#annot"/></svg></button>
              <label class="combo box d-size"><select aria-label="高度"><option>1000</option></select><svg class="tiny"><use href="#chev"/></svg></label>
              <button class="fmt"><strong>B</strong></button><button class="fmt"><em>I</em></button><button class="fmt"><s>A</s></button><button class="fmt blue"><u>U</u></button><button class="fmt blue"><span class="over">O</span></button>
              <button aria-label="放弃"><svg><use href="#undo"/></svg></button><button aria-label="重做"><svg><use href="#redo"/></svg></button><button class="fmt frac" aria-label="堆叠"><sup>b</sup><sub>a</sub></button>
              <label class="combo d-color"><svg class="mini"><use href="#sq"/></svg><select aria-label="颜色"><option>ByLayer</option></select><svg class="tiny"><use href="#chev"/></svg></label>
              <button class="dim" aria-label="标尺"><svg><use href="#ruler"/></svg></button><i></i>
              <button class="ok">确定</button><i></i>
              <button aria-label="选项"><svg><use href="#round"/></svg></button>
            </div>
            <div class="drow">
              <button aria-label="栏数"><svg><use href="#mcol"/></svg><svg class="arrow"><use href="#down"/></svg></button><i></i>
              <button aria-label="对正"><svg><use href="#mjust"/></svg><svg class="arrow"><use href="#down"/></svg></button><i></i>
              <button aria-label="段落"><svg><use href="#parag"/></svg></button><i></i>
              <button class="dim" aria-label="左对齐"><svg><use href="#align"/></svg></button><button class="dim" aria-label="居中"><svg><use href="#align"/></svg></button><button class="dim" aria-label="右对齐"><svg><use href="#align"/></svg></button><button class="dim" aria-label="对正"><svg><use href="#align"/></svg></button><button class="dim" aria-label="分布"><svg><use href="#dist"/></svg></button><i></i>
              <button class="dim" aria-label="行距"><svg><use href="#lsp"/></svg><svg class="arrow"><use href="#down"/></svg></button><i></i>
              <button class="dim" aria-label="编号"><svg><use href="#num"/></svg><svg class="arrow"><use href="#down"/></svg></button><i></i>
              <button aria-label="插入字段"><svg><use href="#field"/></svg></button><i></i>
              <button class="case"><sup>x</sup>A</button><button class="case dim">A<sub>a</sub></button><i></i>
              <button class="sym">@<svg class="arrow"><use href="#down"/></svg></button><i></i>
              <label class="spin"><em>0/</em><input type="text" value="0" aria-label="倾斜角度"><svg><use href="#spin"/></svg></label>
              <label class="spin"><small>a·b</small><input type="text" value="1" aria-label="追踪"><svg><use href="#spin"/></svg></label><i></i>
              <label class="spin"><svg class="oval"><use href="#oval"/></svg><input type="text" value="1" aria-label="宽度因子"><svg><use href="#spin"/></svg></label>
            </div>
          </section>
        </div>
        <div class="layouts">
          <button class="nav" aria-label="第一个"><svg><use href="#nfirst"/></svg></button><button class="nav" aria-label="上一个"><svg><use href="#nprev"/></svg></button><button class="nav" aria-label="下一个"><svg><use href="#nnext"/></svg></button><button class="nav" aria-label="最后一个"><svg><use href="#nlast"/></svg></button>
          <button class="model">模型</button><button>布局1</button><span class="slash">/</span><button>布局2</button><span class="slash">/</span>
          <span class="hscroll"><svg class="tiny left"><use href="#chev"/></svg></span>
        </div>
      </div>

      <div class="vscroll"><svg class="up"><use href="#chev"/></svg><span class="thumb"></span></div>

      <div class="sidebar modify">
        <div class="vtools"><button aria-label="删除"><svg><use href="#erase"/></svg></button><button aria-label="复制"><svg><use href="#bub"/></svg></button><button aria-label="镜像"><svg><use href="#mirror"/></svg></button><button aria-label="偏移"><svg><use href="#offset"/></svg></button><button aria-label="阵列"><svg><use href="#array"/></svg></button><button aria-label="移动"><svg><use href="#move"/></svg></button><button aria-label="旋转"><svg><use href="#rotate"/></svg></button><button aria-label="缩放"><svg><use href="#scale"/></svg></button><button aria-label="拉伸"><svg><use href="#stretch"/></svg></button><button aria-label="修剪"><svg><use href="#trim"/></svg></button><button class="dim" aria-label="延伸"><svg><use href="#trim"/></svg></button><button aria-label="打断于点"><svg><use href="#brk"/></svg></button><button aria-label="打断"><svg><use href="#brk2"/></svg></button><button aria-label="合并"><svg><use href="#join"/></svg></button><button aria-label="倒角"><svg><use href="#fillet"/></svg></button><button aria-label="圆角"><svg><use href="#fillet"/></svg></button><button aria-label="光顺曲线"><svg><use href="#blend"/></svg></button><button aria-label="分解"><svg><use href="#cube"/></svg></button></div>
        <div class="vtools"><button aria-label="前置"><svg><use href="#order"/></svg></button><button aria-label="后置"><svg><use href="#order2"/></svg></button><button aria-label="置于对象之上"><svg><use href="#order"/></svg></button><button aria-label="置于对象之下"><svg><use href="#order2"/></svg></button><i></i><button aria-label="文字前置"><svg><use href="#brk"/></svg></button><button aria-label="填充后置"><svg><use href="#order"/></svg></button></div>
      </div>
    </div>

    <div class="command">
      <div class="grip"><button aria-label="关闭"><svg><use href="#x"/></svg></button><button aria-label="自定义"><svg><use href="#wrench"/></svg></button></div>
      <div class="lines">
        <div class="history">DDEDIT</div>
        <label class="prompt"><svg viewBox="0 0 20 16"><path d="M1 13L6 3l4 10M3 9h6" stroke="#333" stroke-width="2"/><path d="M15 5l-5 9" stroke="#c08a2e" stroke-width="3"/><path class="f" d="M15 8h5l-2.500 3z"/></svg><strong>DDEDIT</strong><span class="cn">选择注释对象或</span><span>[<mark><span class="cn">放弃</span>(<b>U</b>)</mark>]:</span><input type="text" aria-label="命令"></label>
      </div>
    </div>
  </section>
</main>

<footer class="status">
  <button class="ratio">比例 1:100 <svg class="tiny"><use href="#down"/></svg></button>
  <div class="modes"><button aria-label="推断约束"><svg><use href="#move"/></svg></button><button aria-label="捕捉"><svg><use href="#grad"/></svg></button><button class="dk" aria-label="栅格"><svg><use href="#grid"/></svg></button><button aria-label="正交"><svg><use href="#bench"/></svg></button><button aria-label="极轴"><svg><use href="#circ"/></svg></button><button class="lt" aria-label="对象捕捉"><svg><use href="#max"/></svg></button><button class="lt" aria-label="三维捕捉"><svg><use href="#order2"/></svg></button><button aria-label="对象追踪"><svg><use href="#ang"/></svg></button><button class="bl" aria-label="动态UCS"><svg><use href="#stair"/></svg></button><button aria-label="动态输入"><svg><use href="#plus"/></svg></button><button class="bl" aria-label="线宽"><svg><use href="#plus"/></svg></button><button class="on" aria-label="透明度"><svg><use href="#grid"/></svg></button><button aria-label="快捷特性"><svg><use href="#max"/></svg></button><button aria-label="选择循环"><svg><use href="#addsel"/></svg></button><button class="lt" aria-label="注释监视器"><svg><use href="#plus"/></svg></button></div>
</footer>

<a class="brand" href="#civilcn">
  <svg viewBox="120 180 300 240" aria-hidden="true">
    <path fill="#8fbf21" d="M146 283C175 215 260 180 325 185c65 5 98 45 82 99l-10-8c8-40-20-70-82-73-60-3-125 25-169 80z"/>
    <path fill="#1c449b" d="M136 303c-25 45 0 112 84 114 90-5 176-70 195-138-22 42-60 75-125 95-60 15-120 10-143-20-12-15-14-35-11-51z"/>
    <path fill="#1c449b" d="M147 320l44-22v67l-26-4zM295 289l42-18v74l-42 16z"/><path fill="#2a5cab" d="M213 240l53-20v151h-53z"/>
    <path fill="#d3d5d6" d="M270 220l53 20v29l-33 14v77l-20 8zM341 274l43 20-39 47z"/>
  </svg>
  <span class="brandtext"><strong>土木工程网</strong><span>www.civilcn.com</span></span>
</a>
</body>
</html>
```

FILE: styles.css
```css
* { box-sizing: border-box; }
body { margin: 0; height: 100vh; display: flex; flex-direction: column; overflow: hidden; background: #636363; color: #222; font: 10px/14px "Noto Sans", "Noto Sans CJK SC", sans-serif; }
button, select, input { font: inherit; color: inherit; background: none; border: 0; padding: 0; margin: 0; border-radius: 0; min-width: 0; }
button { display: flex; align-items: center; justify-content: center; white-space: nowrap; }
select { appearance: none; flex: 1; opacity: 1; }
svg { width: 12px; height: 12px; flex: none; fill: none; stroke: currentColor; }
svg .f { fill: currentColor; stroke: none; }
svg .w { fill: #eee; stroke: none; }
.sprite { position: absolute; width: 0; height: 0; }
.tiny { width: 7px; height: 7px; }
.mini { width: 8px; height: 8px; }
h1, h2, ul { margin: 0; padding: 0; font-weight: normal; font-size: 10px; list-style: none; }
.dim { color: #999; }

.titlebar { display: flex; height: 16px; flex: none; background: #fefefe; align-items: stretch; }
.app { width: 21px; height: 22px; background: linear-gradient(#a3a3a3, #8b8b8b); border: solid #555; border-width: 0 1px 1px 0; z-index: 2; align-items: flex-start; }
.applogo { width: 14px; height: 17px; stroke: none; }
.app .tiny { margin-top: 6px; width: 5px; }
.quick { display: flex; align-items: center; justify-content: space-between; width: 157px; padding: 0 3px 3px 7px; background: linear-gradient(#a9a9a9, #929292); color: #686868; border-left: 2px solid #777; }
.combo { display: flex; align-items: center; gap: 2px; padding: 0 3px; }
.workspace-pick { width: 143px; background: #b7b7b7; color: #555; padding-bottom: 3px; }
.more { width: 11px; background: #8f8f8f; color: #222; }
.doc-title { flex: 1; text-align: center; font-size: 11px; line-height: 10px; color: #333; padding-left: 12px; }
.expand { width: 11px; background: #8c8c8c; color: #111; }
.search { width: 142px; background: #f8f8f8; padding: 0 0 2px 2px; }
.search::placeholder { color: #777; font-style: italic; opacity: 1; }
.account { display: flex; align-items: center; gap: 4px; width: 199px; padding: 0 3px 3px; background: linear-gradient(#aaa, #919191); color: #444; }
.login { gap: 5px; color: #e4e4e4; font-size: 9px; }
.login svg { stroke: #666; }
.push { margin-left: auto; }
.qm { margin-left: 12px; }
.winbtns { width: 127px; display: flex; align-items: center; justify-content: space-between; padding: 0 9px 7px 32px; color: #888; }
.winbtns svg { width: 9px; height: 9px; }
.faint { color: #ddd; }

.menubar { display: flex; align-items: center; gap: 16px; height: 16px; flex: none; padding-left: 31px; background: linear-gradient(#939393, #646464); color: #efefef; }
.menubar button { line-height: 14px; }
.childbtns { display: flex; gap: 4px; margin-left: auto; color: #222; }
.childbtns svg { width: 8px; height: 8px; }

.filetabs { display: flex; align-items: flex-end; gap: 6px; height: 23px; flex: none; padding: 0 0 3px 8px; background: linear-gradient(#8d8d8b, #a09f9e); border-bottom: 1px solid #777; }
.filetab { width: 103px; height: 17px; display: flex; align-items: center; justify-content: space-between; padding: 0 10px 0 13px; color: #333; background: linear-gradient(#dedede, #bdbdbd); clip-path: polygon(0 100%, 5% 10%, 8% 0, 91% 0, 94% 10%, 100% 100%); }
.filetab .tiny { color: #777; }
.newtab { width: 18px; height: 12px; margin-bottom: 2px; background: #777; border: 1px solid #555; border-radius: 3px 5px 3px 5px; color: #999; }

.toolrows { display: flex; flex-direction: column; gap: 2px; padding: 1px 0 4px; height: 37px; flex: none; background: #636363; }
.toolrow { display: flex; gap: 8px; height: 15px; padding-left: 2px; }
.tools { display: flex; align-items: center; justify-content: space-between; background: #eeeeed; color: #555; padding: 0 1px; }
.tools > i { width: 1px; height: 13px; background: #666; }
.tools .dot { width: 4px; height: 4px; color: #888; }
.standard { width: 401px; }
.styles { width: 368px; }
.arch { width: 351px; margin-left: 4px; }
.space { width: 139px; }
.layer { width: 248px; }
.props { width: 363px; }
.common { width: 306px; }
.toolrow + .toolrow { gap: 7px; padding-left: 1px; }
.tools .combo.off { align-self: stretch; background: #cacaca; color: #777; flex: 1; margin: 1px 0; }
.styles .combo select { text-align: center; font-size: 10px; }
.styles > i, .props > i { margin: 0 3px; }
.mono, .drow { font-family: "Liberation Mono", "Noto Sans CJK SC", monospace; font-size: 9px; }
.rule { width: 38px; height: 1px; background: #777; margin-right: 2px; }
.narrow .rule { width: 22px; }
.tools .first { flex: 0 0 94px; }
.tools .narrow { flex: 0 0 78px; }
.tools .last { flex: 0 0 70px; }

.work { flex: 1; display: flex; min-height: 0; }
.palette { position: relative; width: 64px; flex: none; display: flex; flex-direction: column; background: #efefed; border-right: 1px solid #888; overflow: hidden; }
.palette h2 { height: 16px; line-height: 16px; flex: none; padding-left: 3px; background: linear-gradient(#8f8f8f, #aeaeae); }
.lists { flex: 1; display: flex; flex-direction: column; padding: 5px 0 41px; min-height: 0; }
.lists ul { display: flex; flex-direction: column; flex: 2; border-top: 1px solid #b5b5b5; margin-top: 1px; padding-top: 1px; }
.lists .g16 { flex: 16; border: 0; margin: 0; padding: 0; }
.lists .g3 { flex: 3; }
.lists .g5 { flex: 5; }
.lists .g7 { flex: 7; }
.lists .dark { border-color: #555; }
.lists .plain { border-color: transparent; }
.lists li { flex: 1 1 0; min-height: 0; display: flex; align-items: center; gap: 1px; line-height: 11px; white-space: nowrap; }
.lists svg { width: 9px; height: 10px; }
.open svg { color: #2167ad; }
.wide { display: flex; justify-content: space-between; width: 40px; }
.wide b { font-weight: normal; }
.watermark { position: absolute; left: -6px; top: 84px; font: italic 900 30px/46px "Noto Sans CJK SC", sans-serif; color: #fff; -webkit-text-stroke: 6px #333; paint-order: stroke fill; white-space: nowrap; }

.right { flex: 1; display: flex; flex-direction: column; min-width: 0; }
.stage { flex: 1; display: flex; min-height: 0; }
.sidebar { flex: none; display: flex; flex-direction: column; gap: 6px; padding-top: 4px; background: #636363; }
.draw { width: 21px; padding-left: 2px; padding-right: 4px; }
.modify { width: 17px; padding-left: 4px; }
.vtools { display: flex; flex-direction: column; align-items: center; background: #efefee; color: #666; }
.vtools button { height: 14px; }
.vtools i { width: 11px; height: 1px; margin: 1px 0; background: #aaa; }
.view { flex: 1; display: flex; flex-direction: column; min-width: 0; }
.canvas { position: relative; flex: 1; background: #000; overflow: hidden; }
.drawing { display: block; position: absolute; inset: 0; width: 100%; height: 100%; stroke: none; }
.dimtext { fill: #a8a8a8; font: 200 24px Roboto, "Liberation Sans", sans-serif; text-anchor: middle; }
.ucs { fill: #8d8d8d; font: 200 14px Roboto, sans-serif; text-anchor: middle; }
.mtext { position: absolute; left: 477px; top: 129px; width: 202px; height: 88px; padding: 0 0 6px 3px; background: #676bce; color: #c3c6f6; font: 100 70px/82px Roboto, "Noto Sans", sans-serif; }
.cursor { position: absolute; left: 659px; top: 173px; width: 10px; height: 14px; }

.dialog { position: absolute; left: 327px; top: 36px; width: 505px; padding: 5px 5px 4px; background: #efefed; border: 1px solid #888; box-shadow: inset 0 0 0 4px #b9b9b5; color: #333; }
.dialog h2 { height: 17px; line-height: 17px; padding-left: 1px; background: #98b3d0; color: #1f2b3c; }
.drow { display: flex; align-items: center; justify-content: space-between; height: 19px; padding: 0 2px 0 4px; }
.drow + .drow { height: 24px; border-top: 1px solid #ccc; }
.drow > i { width: 1px; height: 12px; background: #bbb; }
.drow .combo { height: 14px; background: #e4e4e2; border: 1px solid #d0d0d0; border-radius: 2px; padding: 0 2px; gap: 0; }
.drow .box { background: #fff; border-color: #999; }
.d-style { width: 66px; }
.d-style select { text-align: right; padding-right: 3px; }
.d-font { width: 94px; }
.d-font svg:first-child { width: 9px; height: 9px; margin-right: 1px; }
.d-size { width: 40px; }
.d-color { width: 69px; }
.fmt { font: 12px/14px "Liberation Serif", serif; width: 10px; }
.blue { color: #2d5e8e; }
.over { text-decoration: overline; }
.frac { font-size: 8px; font-weight: bold; }
.ok { font-family: "Noto Sans CJK SC", sans-serif; }
.arrow { width: 7px; height: 7px; margin-left: 1px; }
.case, .sym { font-family: "Liberation Sans", sans-serif; font-size: 9px; }
.case sup, .case sub { font-size: 7px; line-height: 8px; }
.case sup, .frac sup { align-self: flex-start; }
.case sub, .frac sub { align-self: flex-end; }
.sym { font-size: 10px; }
.spin { display: flex; align-items: center; height: 14px; }
.spin em { font-size: 10px; }
.spin small { font: bold 8px "Liberation Sans", sans-serif; color: #4b6d91; }
.spin input { width: 36px; height: 14px; background: #fff; border: 1px solid #999; padding-left: 1px; }
.spin input + svg { width: 10px; height: 14px; background: #e3e3e3; border: 1px solid #aaa; color: #111; }
.spin .oval { width: 9px; height: 12px; }

.layouts { display: flex; align-items: center; height: 13px; flex: none; background: #efefee; color: #333; line-height: 13px; }
.nav { width: 12px; height: 13px; border-right: 1px solid #ccc; color: #666; }
.nav svg { width: 9px; height: 9px; }
.model { width: 35px; height: 13px; background: #000; color: #eee; clip-path: polygon(0 0, 100% 0, 88% 100%, 14% 100%); margin-right: 4px; font-weight: bold; }
.slash { margin: 0 4px; font-size: 13px; font-style: italic; color: #555; }
.hscroll { width: 348px; margin-left: auto; }
.left { transform: rotate(90deg); }
.vscroll { width: 14px; flex: none; display: flex; flex-direction: column; align-items: center; background: #efefee; margin-left: 1px; }
.up { width: 9px; height: 16px; transform: rotate(180deg); }
.thumb { width: 12px; height: 13px; margin-top: 194px; background: #cdcdcd; }

.command { height: 40px; flex: none; display: flex; background: #636363; padding-top: 3px; border-bottom: 1px solid #666; }
.grip { width: 21px; display: flex; flex-direction: column; align-items: center; justify-content: flex-end; gap: 6px; padding-bottom: 1px; background: linear-gradient(90deg, #636363, #858585); color: #f2f2f2; }
.grip svg { width: 8px; height: 8px; }
.lines { flex: 1; font: 12px/18px "DejaVu Sans Mono", "Noto Sans CJK SC", monospace; color: #222; min-width: 0; }
.history { height: 18px; padding-left: 1px; background: #c8c8c6; }
.prompt { display: flex; align-items: center; gap: 5px; height: 18px; padding-left: 3px; background: #fdfdfd; white-space: nowrap; }
.prompt svg { width: 19px; height: 14px; }
.prompt input { flex: 1; }
.prompt .cn { font-size: 13px; }
.prompt mark { background: #dcdcdc; color: inherit; }
.prompt b { color: #3432ae; font-weight: normal; }

.status { display: flex; align-items: flex-start; height: 12px; flex: none; overflow: hidden; background: linear-gradient(#929292, #727272); gap: 116px; }
.ratio { padding-top: 3px; gap: 2px; color: #222; }
.modes { display: flex; }
.modes button { width: 14px; height: 16px; background: #adadad; border: 1px solid #8c8c8c; color: #555; }
.modes .lt { background: #eee; }
.modes .dk { background: #8d969e; }
.modes .bl { background: #c4dbea; color: #223; }
.modes .on { background: #a3cae6; color: #7ca9ca; }

.brand { position: fixed; right: 0; bottom: 0; width: 365px; height: 182px; display: flex; align-items: center; padding-left: 31px; background: #fefefe; color: #050505; text-decoration: none; }
.brand svg { width: 100px; height: 80px; stroke: none; }
.brandtext { display: flex; flex-direction: column; padding: 3px 0 0 1px; font: italic 500 26px/28px "Noto Sans", sans-serif; white-space: nowrap; }
.brandtext strong { font: italic 900 39px/36px "Noto Sans CJK SC", sans-serif; }
```
